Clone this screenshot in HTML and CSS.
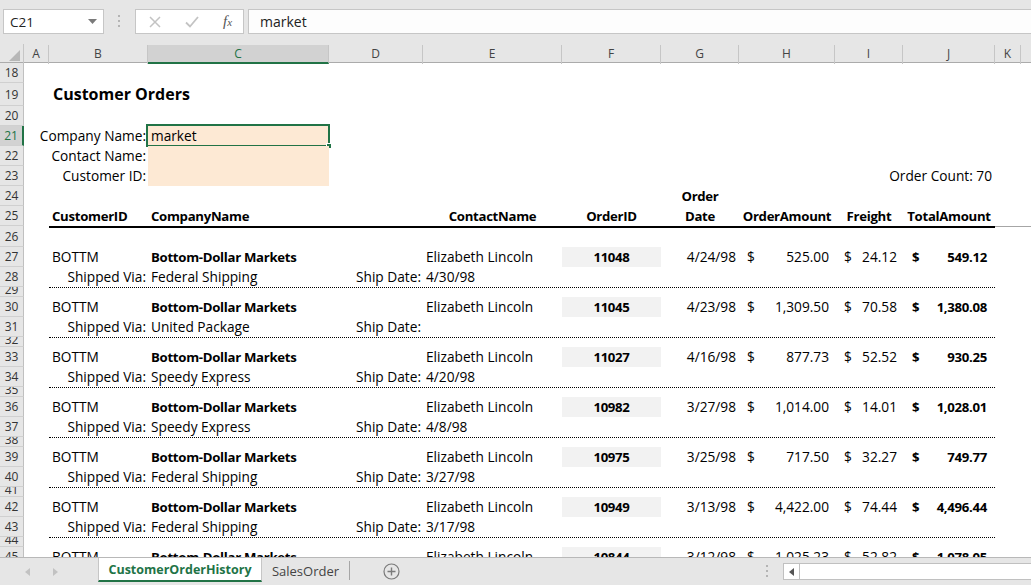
FILE: index.html
```html
<!DOCTYPE html>
<html>
<head>
<meta charset="utf-8">
<title>CustomerOrderHistory</title>
<link rel="stylesheet" href="styles.css">
</head>
<body>
<div class="app">
  <div class="fbar">
    <div class="namebox"><span>C21</span><svg class="caret" width="9" height="5" viewBox="0 0 9 5"><path d="M0 0h9L4.5 5z" fill="#7a7a7a"/></svg></div>
    <div class="grip"><svg width="3" height="13" viewBox="0 0 3 13"><rect x="0" y="0" width="2" height="2" fill="#b4b4b4"/><rect x="0" y="5" width="2" height="2" fill="#b4b4b4"/><rect x="0" y="10" width="2" height="2" fill="#b4b4b4"/></svg></div>
    <div class="fbtns">
      <svg width="12" height="12" viewBox="0 0 12 12"><path d="M1 1l10 10M11 1L1 11" stroke="#c3c3c3" stroke-width="1.5"/></svg>
      <svg width="14" height="12" viewBox="0 0 14 12"><path d="M1 6.5l4 4L13 1" stroke="#c3c3c3" stroke-width="1.8" fill="none"/></svg>
      <span class="fx">f<span class="fxx">x</span></span>
    </div>
    <div class="finput">market</div>
  </div>

  <div class="grid colhead">
    <div class="corner"><svg width="11" height="11" viewBox="0 0 11 11"><path d="M11 0V11H0z" fill="#b7b7b7"/></svg></div>
    <div class="ch">A</div>
    <div class="ch">B</div>
    <div class="ch sel">C</div>
    <div class="ch">D</div>
    <div class="ch">E</div>
    <div class="ch">F</div>
    <div class="ch">G</div>
    <div class="ch">H</div>
    <div class="ch">I</div>
    <div class="ch">J</div>
    <div class="ch">K</div>
    <div class="ch last"></div>
  </div>

  <div class="sheet">
    <div class="grid row"><div class="rh">18</div></div>
    <div class="grid row tall"><div class="rh">19</div><div class="c title">Customer Orders</div></div>
    <div class="grid row"><div class="rh">20</div></div>
    <div class="grid row"><div class="rh on">21</div><div class="c lab r">Company Name:</div><div class="c cC fill"><span>market</span><div class="selbox"><div class="handle"></div></div></div></div>
    <div class="grid row"><div class="rh">22</div><div class="c lab r">Contact Name:</div><div class="c cC fill"></div></div>
    <div class="grid row"><div class="rh">23</div><div class="c lab r">Customer ID:</div><div class="c cC fill"></div><div class="c count r">Order Count: 70</div></div>
    <div class="grid row"><div class="rh">24</div><div class="c cG b ctr">Order</div></div>
    <div class="grid row"><div class="rh">25</div>
      <div class="c cB b">CustomerID</div>
      <div class="c cC b">CompanyName</div>
      <div class="c cE b ctr">ContactName</div>
      <div class="c cF b ctr">OrderID</div>
      <div class="c cG b ctr">Date</div>
      <div class="c cH b ctr">OrderAmount</div>
      <div class="c cI b ctr">Freight</div>
      <div class="c cJ b ctr">TotalAmount</div>
    </div>
    <div class="grid row r26"><div class="rh">26</div><div class="hline"></div><div class="gline"></div></div>

    <div class="grid row"><div class="rh">27</div><div class="c cB">BOTTM</div><div class="c cC b">Bottom-Dollar Markets</div><div class="c cE">Elizabeth Lincoln</div><div class="c cF b ctr shade">11048</div><div class="c cG r">4/24/98</div><div class="c cH acc"><span>$</span><span>525.00</span></div><div class="c cI acc"><span>$</span><span>24.12</span></div><div class="c cJ acc b"><span>$</span><span>549.12</span></div></div>
    <div class="grid row"><div class="rh">28</div><div class="c cB r">Shipped Via:</div><div class="c cC">Federal Shipping</div><div class="c cD r">Ship Date:</div><div class="c cE">4/30/98</div></div>
    <div class="grid row sm"><div class="rh">29</div><div class="dots"></div></div>

    <div class="grid row"><div class="rh">30</div><div class="c cB">BOTTM</div><div class="c cC b">Bottom-Dollar Markets</div><div class="c cE">Elizabeth Lincoln</div><div class="c cF b ctr shade">11045</div><div class="c cG r">4/23/98</div><div class="c cH acc"><span>$</span><span>1,309.50</span></div><div class="c cI acc"><span>$</span><span>70.58</span></div><div class="c cJ acc b"><span>$</span><span>1,380.08</span></div></div>
    <div class="grid row"><div class="rh">31</div><div class="c cB r">Shipped Via:</div><div class="c cC">United Package</div><div class="c cD r">Ship Date:</div><div class="c cE"></div></div>
    <div class="grid row sm"><div class="rh">32</div><div class="dots"></div></div>

    <div class="grid row"><div class="rh">33</div><div class="c cB">BOTTM</div><div class="c cC b">Bottom-Dollar Markets</div><div class="c cE">Elizabeth Lincoln</div><div class="c cF b ctr shade">11027</div><div class="c cG r">4/16/98</div><div class="c cH acc"><span>$</span><span>877.73</span></div><div class="c cI acc"><span>$</span><span>52.52</span></div><div class="c cJ acc b"><span>$</span><span>930.25</span></div></div>
    <div class="grid row"><div class="rh">34</div><div class="c cB r">Shipped Via:</div><div class="c cC">Speedy Express</div><div class="c cD r">Ship Date:</div><div class="c cE">4/20/98</div></div>
    <div class="grid row sm"><div class="rh">35</div><div class="dots"></div></div>

    <div class="grid row"><div class="rh">36</div><div class="c cB">BOTTM</div><div class="c cC b">Bottom-Dollar Markets</div><div class="c cE">Elizabeth Lincoln</div><div class="c cF b ctr shade">10982</div><div class="c cG r">3/27/98</div><div class="c cH acc"><span>$</span><span>1,014.00</span></div><div class="c cI acc"><span>$</span><span>14.01</span></div><div class="c cJ acc b"><span>$</span><span>1,028.01</span></div></div>
    <div class="grid row"><div class="rh">37</div><div class="c cB r">Shipped Via:</div><div class="c cC">Speedy Express</div><div class="c cD r">Ship Date:</div><div class="c cE">4/8/98</div></div>
    <div class="grid row sm"><div class="rh">38</div><div class="dots"></div></div>

    <div class="grid row"><div class="rh">39</div><div class="c cB">BOTTM</div><div class="c cC b">Bottom-Dollar Markets</div><div class="c cE">Elizabeth Lincoln</div><div class="c cF b ctr shade">10975</div><div class="c cG r">3/25/98</div><div class="c cH acc"><span>$</span><span>717.50</span></div><div class="c cI acc"><span>$</span><span>32.27</span></div><div class="c cJ acc b"><span>$</span><span>749.77</span></div></div>
    <div class="grid row"><div class="rh">40</div><div class="c cB r">Shipped Via:</div><div class="c cC">Federal Shipping</div><div class="c cD r">Ship Date:</div><div class="c cE">3/27/98</div></div>
    <div class="grid row sm"><div class="rh">41</div><div class="dots"></div></div>

    <div class="grid row"><div class="rh">42</div><div class="c cB">BOTTM</div><div class="c cC b">Bottom-Dollar Markets</div><div class="c cE">Elizabeth Lincoln</div><div class="c cF b ctr shade">10949</div><div class="c cG r">3/13/98</div><div class="c cH acc"><span>$</span><span>4,422.00</span></div><div class="c cI acc"><span>$</span><span>74.44</span></div><div class="c cJ acc b"><span>$</span><span>4,496.44</span></div></div>
    <div class="grid row"><div class="rh">43</div><div class="c cB r">Shipped Via:</div><div class="c cC">Federal Shipping</div><div class="c cD r">Ship Date:</div><div class="c cE">3/17/98</div></div>
    <div class="grid row sm"><div class="rh">44</div><div class="dots"></div></div>

    <div class="grid row"><div class="rh">45</div><div class="c cB">BOTTM</div><div class="c cC b">Bottom-Dollar Markets</div><div class="c cE">Elizabeth Lincoln</div><div class="c cF b ctr shade">10844</div><div class="c cG r">3/12/98</div><div class="c cH acc"><span>$</span><span>1,025.23</span></div><div class="c cI acc"><span>$</span><span>52.82</span></div><div class="c cJ acc b"><span>$</span><span>1,078.05</span></div></div>
  </div>

  <div class="tabbar">
    <div class="navs">
      <svg width="5" height="8" viewBox="0 0 5 8"><path d="M5 0V8L0 4z" fill="#c2c2c2"/></svg>
      <svg width="5" height="8" viewBox="0 0 5 8"><path d="M0 0V8L5 4z" fill="#c2c2c2"/></svg>
    </div>
    <div class="tab active">CustomerOrderHistory</div>
    <div class="tab">SalesOrder</div>
    <div class="add"><svg width="17" height="17" viewBox="0 0 17 17"><circle cx="8.5" cy="8.5" r="7.5" fill="none" stroke="#7a7a7a" stroke-width="1.2"/><path d="M8.5 4.5v8M4.5 8.5h8" stroke="#7a7a7a" stroke-width="1.4"/></svg></div>
    <div class="spacer"></div>
    <div class="hdots"><svg width="3" height="13" viewBox="0 0 3 13"><rect x="0" y="0" width="2" height="2" fill="#b4b4b4"/><rect x="0" y="5" width="2" height="2" fill="#b4b4b4"/><rect x="0" y="10" width="2" height="2" fill="#b4b4b4"/></svg></div>
    <div class="hscroll"><div class="larrow"><svg width="5" height="8" viewBox="0 0 5 8"><path d="M5 0V8L0 4z" fill="#555"/></svg></div><div class="track"></div></div>
  </div>
</div>
</body>
</html>
```

FILE: styles.css
```css
* { box-sizing: border-box; }
html, body { margin: 0; padding: 0; background: #fff; }
body { width: 1031px; height: 585px; overflow: hidden; font-family: "Open Sans", "Liberation Sans", sans-serif; }

.app { display: flex; flex-direction: column; width: 1031px; height: 585px; }

/* formula bar */
.fbar { height: 44px; flex: none; background: #e6e6e6; display: flex; align-items: flex-start; padding-top: 9px; }
.namebox { margin-left: 3px; width: 101px; height: 25px; background: #fff; border: 1px solid #c6c6c6; display: flex; align-items: center; justify-content: space-between; padding: 0 6px 0 6px; font-size: 13.5px; color: #222; }
.grip { width: 31px; height: 25px; display: flex; align-items: center; justify-content: center; }
.fbtns { width: 109px; height: 25px; background: #fff; border: 1px solid #c6c6c6; display: flex; align-items: center; padding-left: 13px; gap: 24px; }
.fx { font-family: "Liberation Serif", serif; font-style: italic; font-size: 15px; color: #555; line-height: 1; }
.fxx { font-size: 11px; }
.finput { margin-left: 4px; flex: 1; height: 25px; background: #fdfdfd; border: 1px solid #c6c6c6; border-right: none; padding-left: 11px; font-size: 14px; line-height: 23px; color: #222; }

/* grid */
.grid { display: grid; grid-template-columns: 24px 25px 99px 181px 94px 139px 99px 78px 96px 68px 92px 26px 10px; }

.colhead { height: 19px; flex: none; background: #e6e6e6; border-bottom: 1px solid #ababab; }
.corner { display: flex; align-items: flex-end; justify-content: flex-end; padding: 0 3px 3px 0; border-right: 1px solid #c6c6c6; }
.ch { border-right: 1px solid #c6c6c6; text-align: center; font-size: 12px; line-height: 17px; color: #444; margin-top: 1px; }
.ch.sel { background: #d2d2d2; color: #217346; border-bottom: 2px solid #217346; }
.ch.last { border-right: none; }

.sheet { flex: 1; overflow: hidden; }
.row { height: 20px; }
.row.tall { height: 23px; }
.row.r26 { height: 21px; }
.row.sm { height: 10px; }

.rh { grid-column: 1; grid-row: 1; background: #e6e6e6; border-right: 1px solid #c0c0c0; border-bottom: 1px solid #d0d0d0; font-size: 12px; color: #333; text-align: center; overflow: hidden; display: flex; align-items: center; justify-content: center; }
.rh.on { background: #d2d2d2; color: #217346; border-right: 2px solid #217346; }
.sm .rh { align-items: flex-start; line-height: 6px; }

.c { grid-row: 1; font-size: 13.7px; line-height: 20px; color: #000; white-space: nowrap; padding: 0 3px; position: relative; }
.tall .c { line-height: 23px; }
.b { font-weight: 700; font-size: 13.2px; letter-spacing: -0.3px; }
.r { text-align: right; padding: 0 2px 0 0; }
.ctr { text-align: center; padding: 0; }

.cB { grid-column: 3; }
.cC { grid-column: 4; }
.cD { grid-column: 5; }
.cE { grid-column: 6; }
.cF { grid-column: 7; }
.cG { grid-column: 8; }
.cH { grid-column: 9; }
.cI { grid-column: 10; }
.cJ { grid-column: 11; }

.title { grid-column: 3 / 6; font-size: 16px; font-weight: 700; padding-left: 4px; }
.lab { grid-column: 2 / 4; display: flex; justify-content: flex-end; }
.count { grid-column: 10 / 12; padding-right: 3px; }
.fill { background: #fde9d4; }
.selbox { position: absolute; top: -2px; left: -2px; right: -1px; bottom: -1px; border: 2px solid #217346; }
.handle { position: absolute; right: -4px; bottom: -4px; width: 6px; height: 6px; background: #217346; border: 1px solid #fff; }

.shade { background: #f2f2f2; }
.cG.r { padding-right: 3px; }
.acc { display: flex; justify-content: space-between; padding: 0 6px 0 8px; }
.cI.acc { padding: 0 6px 0 9px; }
.cJ.acc { padding: 0 8px 0 9px; }

.hline { grid-column: 3 / 12; grid-row: 1; border-top: 2px solid #000; }
.gline { grid-column: 12 / 14; grid-row: 1; border-top: 1px solid #a6a6a6; }
.dots { grid-column: 3 / 12; grid-row: 1; border-top: 1px dotted #000; }

/* tabs */
.tabbar { height: 28px; flex: none; background: #e6e6e6; border-top: 1px solid #b8b8b8; display: flex; align-items: stretch; }
.navs { width: 98px; display: flex; align-items: center; padding-left: 25px; gap: 23px; }
.tab { display: flex; align-items: center; justify-content: center; font-size: 13px; color: #444; }
.tab.active { width: 164px; background: #fff; color: #217346; font-weight: 700; font-size: 12.5px; border-left: 1px solid #c6c6c6; border-right: 1px solid #c6c6c6; border-bottom: 2px solid #217346; margin-bottom: 3px; }
.tab:not(.active) { width: 88px; margin: 3px 0 5px; border-right: 1px solid #a6a6a6; }
.add { margin-left: 33px; display: flex; align-items: center; }
.spacer { flex: 1; }
.hdots { display: flex; align-items: center; margin-right: 14px; }
.hscroll { width: 248px; height: 17px; margin-top: 5px; background: #fff; border: 1px solid #c0c0c0; border-right: none; display: flex; }
.larrow { width: 16px; border-right: 1px solid #c0c0c0; display: flex; align-items: center; justify-content: center; }
.track { flex: 1; }
```
